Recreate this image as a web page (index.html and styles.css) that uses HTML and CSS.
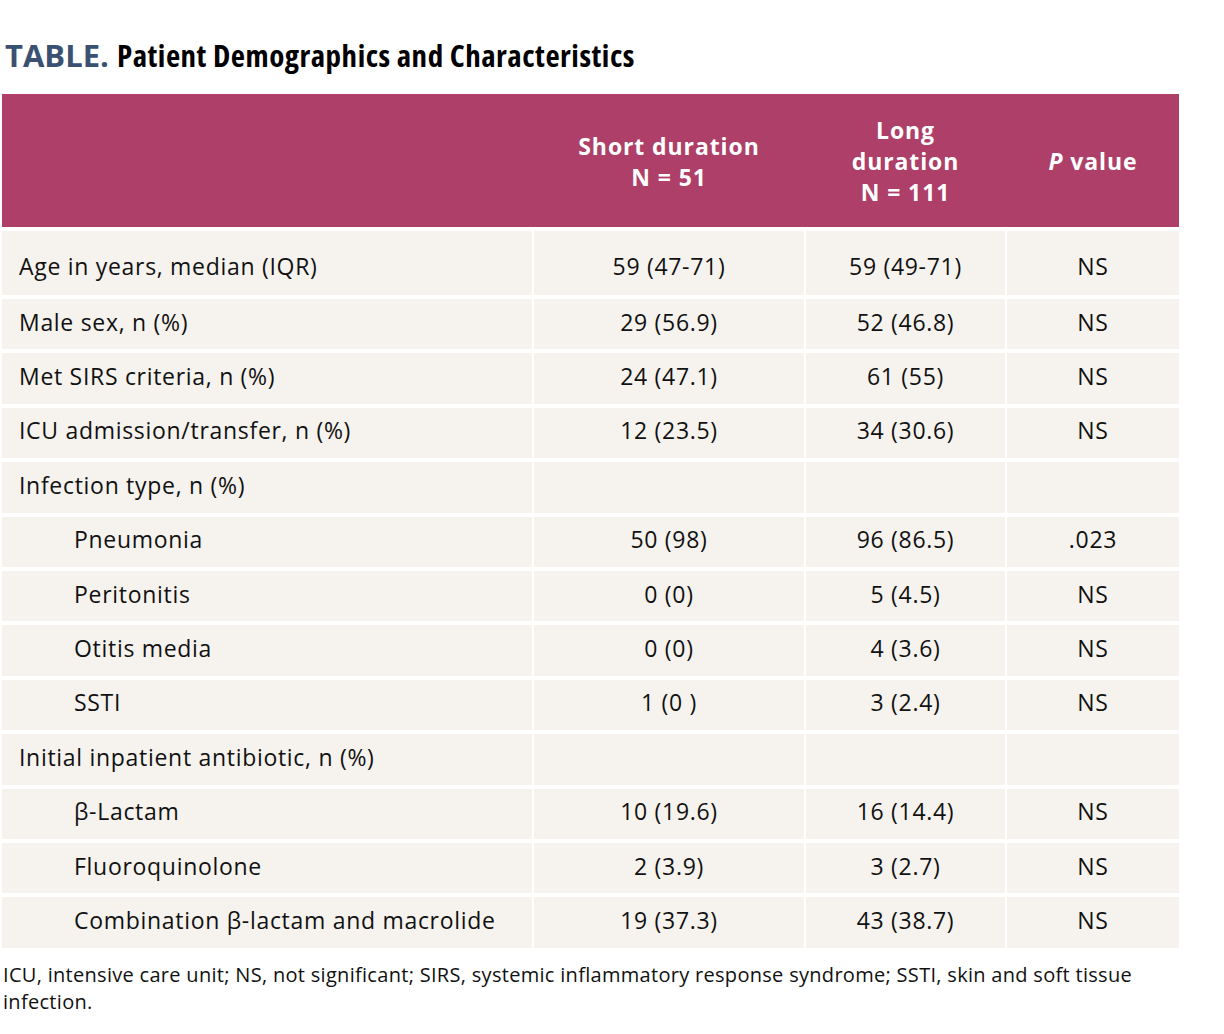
FILE: index.html
```html
<!DOCTYPE html>
<html>
<head>
<meta charset="utf-8">
<link rel="stylesheet" href="styles.css">
</head>
<body>
<div class="page">
  <h1 class="title"><span class="label">TABLE.</span> <span class="cond">Patient Demographics and Characteristics</span></h1>
  <div class="table">
    <div class="thead">
      <div class="th"></div>
      <div class="th">Short duration<br>N = 51</div>
      <div class="th">Long<br>duration<br>N = 111</div>
      <div class="th"><i>P</i> value</div>
    </div>
    <div class="tbody">
      <div class="tr first"><div class="td lbl">Age in years, median (IQR)</div><div class="td">59 (47-71)</div><div class="td">59 (49-71)</div><div class="td">NS</div></div>
      <div class="tr"><div class="td lbl">Male sex, n (%)</div><div class="td">29 (56.9)</div><div class="td">52 (46.8)</div><div class="td">NS</div></div>
      <div class="tr"><div class="td lbl">Met SIRS criteria, n (%)</div><div class="td">24 (47.1)</div><div class="td">61 (55)</div><div class="td">NS</div></div>
      <div class="tr"><div class="td lbl">ICU admission/transfer, n (%)</div><div class="td">12 (23.5)</div><div class="td">34 (30.6)</div><div class="td">NS</div></div>
      <div class="tr"><div class="td lbl">Infection type, n (%)</div><div class="td"></div><div class="td"></div><div class="td"></div></div>
      <div class="tr"><div class="td lbl sub">Pneumonia</div><div class="td">50 (98)</div><div class="td">96 (86.5)</div><div class="td">.023</div></div>
      <div class="tr"><div class="td lbl sub">Peritonitis</div><div class="td">0 (0)</div><div class="td">5 (4.5)</div><div class="td">NS</div></div>
      <div class="tr"><div class="td lbl sub">Otitis media</div><div class="td">0 (0)</div><div class="td">4 (3.6)</div><div class="td">NS</div></div>
      <div class="tr"><div class="td lbl sub">SSTI</div><div class="td">1 (0 )</div><div class="td">3 (2.4)</div><div class="td">NS</div></div>
      <div class="tr"><div class="td lbl">Initial inpatient antibiotic, n (%)</div><div class="td"></div><div class="td"></div><div class="td"></div></div>
      <div class="tr"><div class="td lbl sub">β-Lactam</div><div class="td">10 (19.6)</div><div class="td">16 (14.4)</div><div class="td">NS</div></div>
      <div class="tr"><div class="td lbl sub">Fluoroquinolone</div><div class="td">2 (3.9)</div><div class="td">3 (2.7)</div><div class="td">NS</div></div>
      <div class="tr"><div class="td lbl sub">Combination β-lactam and macrolide</div><div class="td">19 (37.3)</div><div class="td">43 (38.7)</div><div class="td">NS</div></div>
    </div>
  </div>
  <p class="note">ICU, intensive care unit; NS, not significant; SIRS, systemic inflammatory response syndrome; SSTI, skin and soft tissue infection.</p>
</div>
</body>
</html>
```
FILE: styles.css
```css
html, body {
  margin: 0;
  padding: 0;
  background: #ffffff;
}
.page {
  font-family: "Open Sans", "Noto Sans", sans-serif;
  color: #111111;
  padding: 37px 0 0 2px;
  width: 1177px;
}
.title {
  margin: 0 0 20px 3px;
  font-size: 31px;
  line-height: 37px;
  font-weight: 700;
  white-space: nowrap;
}
.label {
  color: #3a5172;
}
.cond {
  font-stretch: 75%;
  letter-spacing: 0.5px;
  color: #000;
}
.thead, .tr {
  display: grid;
  grid-template-columns: 530px 270px 199px 172px;
  column-gap: 2px;
}
.thead {
  background: #ad3f68;
  height: 133px;
  align-items: center;
  color: #ffffff;
  font-weight: 700;
  font-size: 23px;
  line-height: 31px;
  text-align: center;
  letter-spacing: 0.9px;
}
.th {
  padding-top: 2px;
}
.th i {
  font-style: italic;
}
.tbody {
  display: flex;
  flex-direction: column;
  gap: 4px;
  padding-top: 4px;
}
.tr {
  height: 50.4px;
  font-size: 23px;
  letter-spacing: 0.7px;
}
.tr.first {
  height: 64px;
}
.td {
  background: #f6f3ef;
  display: flex;
  align-items: center;
  justify-content: center;
  padding-bottom: 5px;
}
.tr.first .td {
  padding-bottom: 0;
  padding-top: 6px;
}
.td.lbl {
  justify-content: flex-start;
  padding-left: 17px;
}
.td.sub {
  padding-left: 72px;
}
.note {
  margin: 13px 0 0 1px;
  font-size: 20px;
  line-height: 27px;
  letter-spacing: 0.3px;
  color: #111;
}
```
